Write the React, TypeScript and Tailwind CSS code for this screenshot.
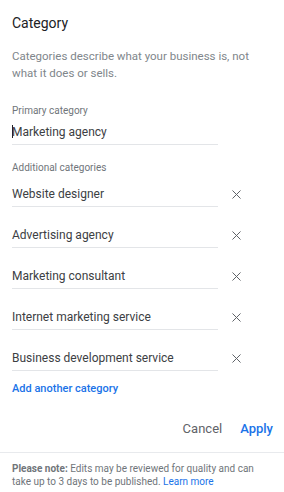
import { X } from "lucide-react";

const additional = [
  "Website designer",
  "Advertising agency",
  "Marketing consultant",
  "Internet marketing service",
  "Business development service",
];

function Field({ value, cursor }: { value: string; cursor?: boolean }) {
  return (
    <div className="w-[206px] h-[26px] border-b border-[#e3e5e8] flex items-center text-[12px] text-[#3c4043]">
      {cursor && <span className="w-px h-[13px] bg-[#202124] -mr-px" />}
      <span>{value}</span>
    </div>
  );
}

export default function App() {
  return (
    <div className="w-[284px] h-[492px] bg-white flex flex-col font-['Roboto',sans-serif] overflow-hidden">
      <div className="px-3 pt-[14px]">
        <h1 className="text-[14px] leading-[18px] text-[#202124]">Category</h1>
        <p className="mt-[16px] text-[11.5px] leading-[17px] text-[#80868b]">
          Categories describe what your business is, not what it does or sells.
        </p>

        {/* PRIMARY */}
        <div className="mt-[23px] text-[10px] leading-[12px] text-[#70757a]">Primary category</div>
        <div className="mt-[2px]">
          <Field value="Marketing agency" cursor />
        </div>

        {/* ADDITIONAL */}
        <div className="mt-[17px] text-[10px] leading-[12px] text-[#70757a]">Additional categories</div>
        <div className="mt-[7px] flex flex-col gap-[15px]">
          {additional.map((c) => (
            <div key={c} className="flex items-center">
              <Field value={c} />
              <button className="ml-[10px] w-[16px] h-[16px] flex items-center justify-center text-[#5f6368]">
                <X className="w-[15px] h-[15px]" strokeWidth={1.6} />
              </button>
            </div>
          ))}
        </div>

        <button className="mt-[11px] text-[11px] leading-[14px] font-medium text-[#1a73e8]">
          Add another category
        </button>
      </div>

      {/* ACTIONS */}
      <div className="mt-auto flex justify-end items-center gap-[18px] pr-[11px] h-[46px]">
        <button className="text-[13px] text-[#5f6368]">Cancel</button>
        <button className="text-[13px] text-[#1a73e8] font-medium">Apply</button>
      </div>
      <div className="border-t border-[#e8eaed] pl-3 pr-[24px] pt-[10px] pb-[4px] text-[10px] leading-[12.5px] text-[#70757a]">
        <p>
          <b className="font-bold">Please note:</b> Edits may be reviewed for quality and can take up to
          3 days to be published. <a className="text-[#1a73e8]">Learn more</a>
        </p>
      </div>
    </div>
  );
}
